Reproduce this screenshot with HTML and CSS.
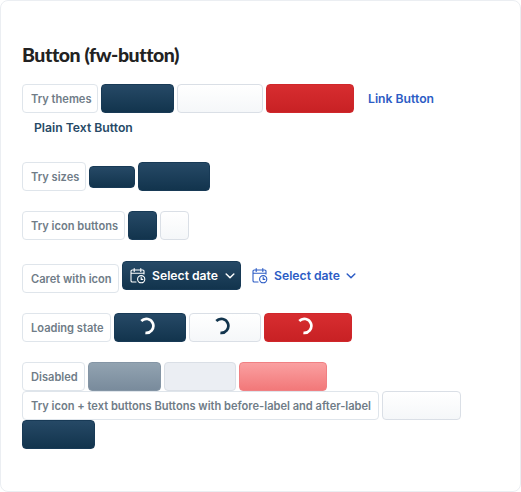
FILE: index.html
```html
<!DOCTYPE html>
<html lang="en">
<head>
<meta charset="utf-8">
<title>Button (fw-button)</title>
<link rel="stylesheet" href="styles.css">
</head>
<body>
<svg class="defs" width="0" height="0" aria-hidden="true">
  <symbol id="calendar" viewBox="0 0 16 16">
    <path d="M1 5.2h13M14 6V3.3A1.3 1.3 0 0 0 12.7 2H2.3A1.3 1.3 0 0 0 1 3.3v9.4A1.3 1.3 0 0 0 2.3 14H6M4.2.6v2.8M10.8.6v2.8"/>
    <circle cx="11.2" cy="11.2" r="3.6"/>
    <path d="M11.2 9.4v2h1.6"/>
  </symbol>
  <symbol id="caret" viewBox="0 0 10 6"><path d="M1.2 1l3.8 3.7L8.8 1"/></symbol>
  <symbol id="spinner" viewBox="0 0 18 18"><path d="M4.3 4A7 7 0 1 1 8.4 15.8"/></symbol>
</svg>
<main class="card">
  <h1 class="title">Button (fw-button)</h1>
  <div class="row">
    <span class="label w-themes">Try themes</span>
    <button class="btn primary w73"></button>
    <button class="btn secondary w86"></button>
    <button class="btn danger w88"></button>
    <button class="text-btn link link-button">Link Button</button>
  </div>
  <div class="row plain-row"><button class="text-btn plain">Plain Text Button</button></div>
  <div class="row sizes">
    <span class="label w-sizes">Try sizes</span>
    <button class="btn primary small"></button>
    <button class="btn primary w72"></button>
  </div>
  <div class="row icons">
    <span class="label w-icons">Try icon buttons</span>
    <button class="btn primary w29"></button>
    <button class="btn secondary w29"></button>
  </div>
  <div class="row carets">
    <span class="label w-caret">Caret with icon</span>
    <button class="btn primary select"><svg class="calendar"><use href="#calendar"/></svg><span class="date">Select date</span><svg class="caret"><use href="#caret"/></svg></button>
    <button class="text-btn link select"><svg class="calendar"><use href="#calendar"/></svg><span class="date">Select date</span><svg class="caret"><use href="#caret"/></svg></button>
  </div>
  <div class="row loading">
    <span class="label w-loading">Loading state</span>
    <button class="btn primary w72"><svg class="spinner"><use href="#spinner"/></svg></button>
    <button class="btn secondary w72"><svg class="spinner"><use href="#spinner"/></svg></button>
    <button class="btn danger w88"><svg class="spinner"><use href="#spinner"/></svg></button>
  </div>
  <div class="row disabled">
    <span class="label w-disabled">Disabled</span>
    <button class="btn primary w73" disabled></button>
    <button class="btn secondary w72" disabled></button>
    <button class="btn danger w88" disabled></button>
  </div>
  <div class="row">
    <span class="label w-long">Try icon + text buttons Buttons with before-label and after-label</span>
    <button class="btn secondary w79"></button>
  </div>
  <div class="row"><button class="btn primary w73"></button></div>
</main>
</body>
</html>
```
FILE: styles.css
```css
* { box-sizing: border-box; }
body { margin: 0; background: #fff; font-family: Inter, "Liberation Sans", sans-serif; }
.defs { display: block; }
.card { width: 521px; height: 492px; border: 1px solid #ebeef2; border-radius: 8px; padding: 41px 21px 0; }
.title { margin: 0 0 16px; height: 26px; line-height: 25px; font-family: Lato, sans-serif; font-size: 19.5px; font-weight: 900; letter-spacing: -0.43px; color: #222; white-space: nowrap; }
.row { display: flex; align-items: center; gap: 3px; height: 29px; }
.plain-row { padding-left: 12px; }
.sizes, .icons, .loading, .disabled { margin-top: 20px; }
.carets { margin-top: 21px; height: 32px; align-items: flex-start; }

.label { flex: none; height: 29px; padding: 1px 0 0 8px; border: 1px solid #dfe5eb; border-radius: 4px; color: #6f7c87; font-size: 11.1px; font-weight: 600; line-height: 27px; white-space: nowrap; }
.w-themes { width: 76px; }
.w-sizes { width: 64px; }
.w-icons { width: 103px; }
.w-caret { width: 97px; margin-top: 3px; }
.w-loading { width: 89px; }
.w-disabled { width: 63px; }
.w-long { width: 357px; }

button { flex: none; margin: 0; font-family: inherit; font-size: 12.2px; font-weight: 600; }
.btn { display: flex; align-items: center; justify-content: center; height: 29px; padding: 0; border: 1px solid; border-radius: 4px; }
.primary { border-color: #183a56; background: linear-gradient(#264966, #12344d); color: #fff; }
.secondary { border-color: #dadfe6; background: linear-gradient(#fff, #f5f7f9); color: #12344d; }
.danger { border-color: #d0272b; background: linear-gradient(#d72d30, #c82124); color: #fff; }
.primary:disabled { border-color: #8495a5; background: linear-gradient(#92a3b1, #798b9c); }
.secondary:disabled { border-color: #dadfe6; background: #ebeef3; }
.danger:disabled { border-color: #f08083; background: linear-gradient(#faa0a1, #f27879); }
.small { width: 46px; height: 22px; }
.w29 { width: 29px; }
.w72 { width: 72px; }
.w73 { width: 73px; }
.w79 { width: 79px; }
.w86 { width: 86px; }
.w88 { width: 88px; }

.text-btn { display: flex; align-items: center; height: 29px; padding: 0; border: 0; background: none; white-space: nowrap; }
.link { color: #2c5cc5; }
.plain { color: #264966; }
.link-button { margin-left: 11px; }
.select { width: 119px; justify-content: flex-start; padding-left: 7px; }
.select.text-btn { margin-left: -1px; padding-left: 9px; }
.date { width: 66px; margin: 0 7px 0 6px; text-align: left; white-space: nowrap; }
.text-btn .date { margin-right: 6px; }
svg { fill: none; stroke: currentColor; stroke-linecap: round; stroke-linejoin: round; flex: none; }
.calendar { width: 16px; height: 16px; stroke-width: 1.1; }
.caret { width: 10px; height: 6px; stroke-width: 1.5; }
.spinner { width: 18px; height: 18px; margin: -4px 0 0 -9px; stroke-width: 2.7; stroke-linecap: butt; }
```
